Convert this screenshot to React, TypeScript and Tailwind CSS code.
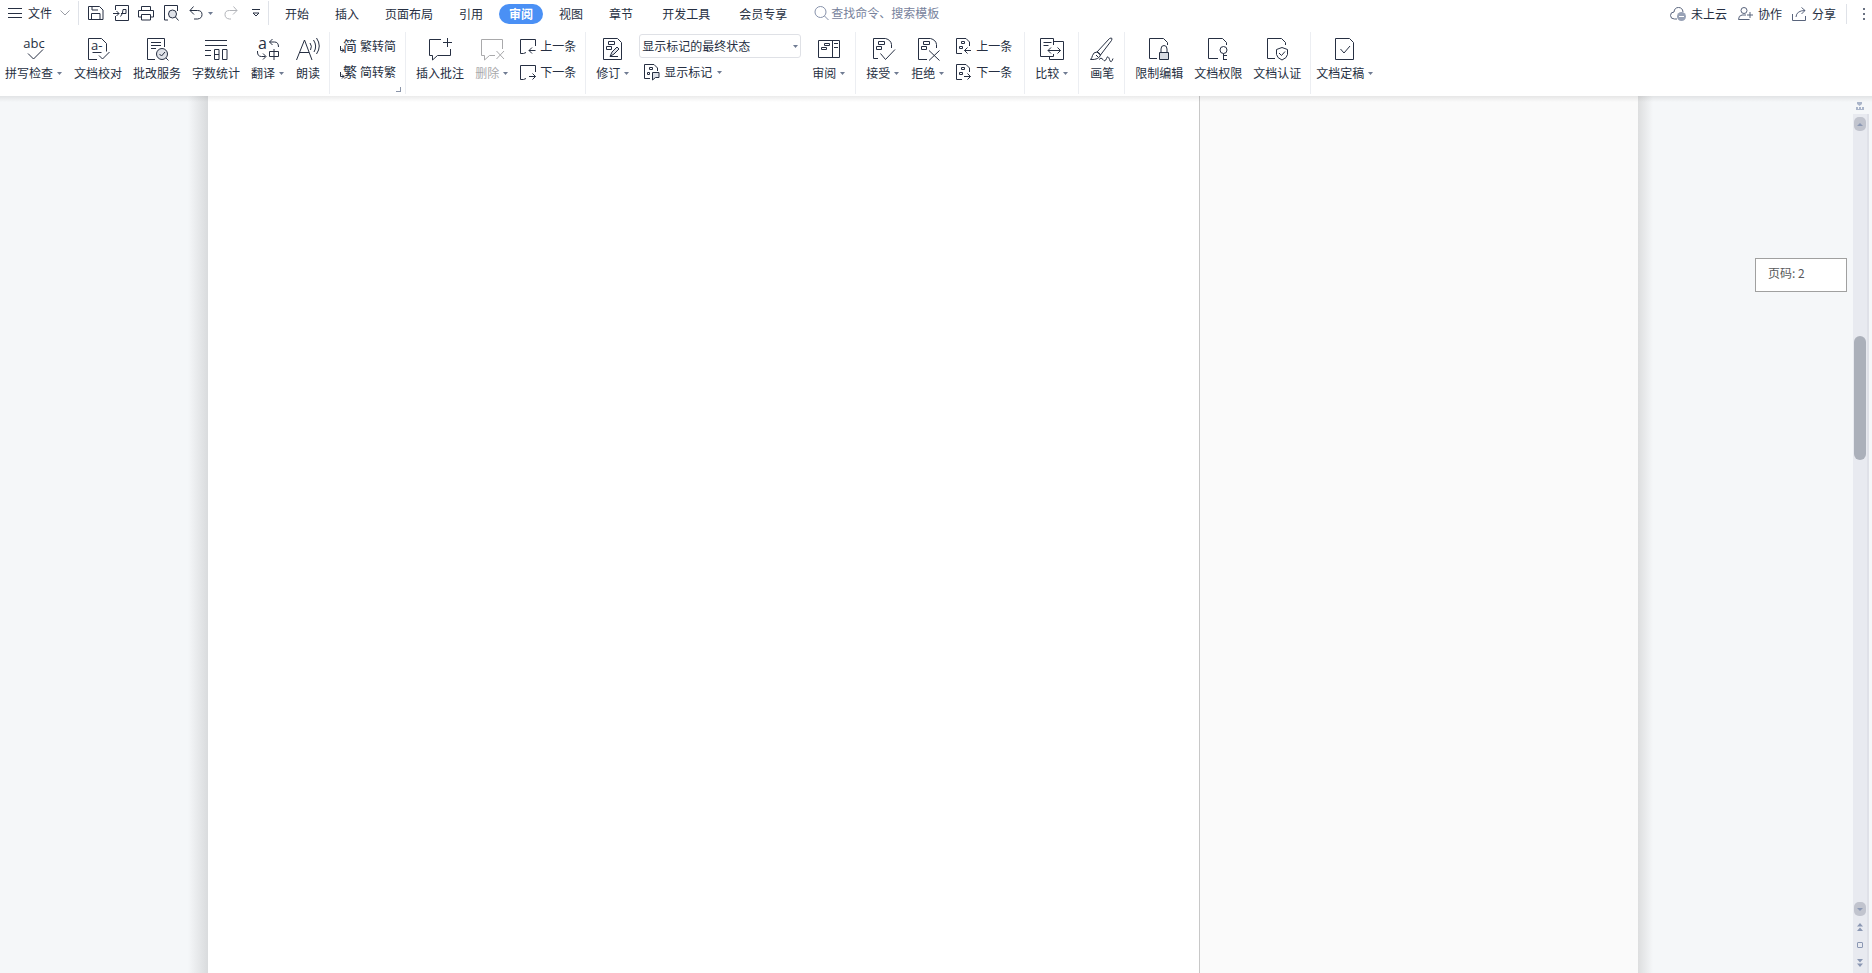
import React from "react";

type Children = { children: React.ReactNode };

function Glyph({ w, h, children }: Children & { w: number; h: number }) {
  return (
    <svg
      width={w}
      height={h}
      viewBox={`0 0 ${w} ${h}`}
      fill="none"
      stroke="currentColor"
      strokeWidth="1"
      aria-hidden="true"
      className="shrink-0 overflow-visible"
    >
      {children}
    </svg>
  );
}

function Caret() {
  return (
    <svg width="5" height="3" viewBox="0 0 5 3" fill="#6f7b92" aria-hidden="true" className="mx-px shrink-0">
      <path d="M0 0h5L2.500 3z" />
    </svg>
  );
}

function BigButton({
  label,
  icon,
  caret,
  disabled,
}: {
  label: string;
  icon: React.ReactNode;
  caret?: boolean;
  disabled?: boolean;
}) {
  return (
    <button
      type="button"
      disabled={disabled}
      className="flex shrink-0 flex-col items-center gap-1 self-start pt-[5px] text-[#262f42] disabled:text-[#a9a9ab]"
    >
      {icon}
      <span className="flex items-center gap-[3px] leading-4">
        {label}
        {caret && <Caret />}
      </span>
    </button>
  );
}

function SmallButton({ label, icon, caret }: { label: string; icon: React.ReactNode; caret?: boolean }) {
  return (
    <button type="button" className="flex h-5 shrink-0 items-center gap-1 text-[#262f42]">
      {icon}
      <span className="leading-4">{label}</span>
      {caret && <Caret />}
    </button>
  );
}

function Group({ children, last }: Children & { last?: boolean }) {
  return (
    <div
      className={
        last
          ? "relative flex shrink-0 gap-[11px] pl-[5px]"
          : "relative flex shrink-0 gap-[11px] border-r border-[#eceef2] pr-[9px] pl-[10px] first:pl-[5px]"
      }
    >
      {children}
    </div>
  );
}

/* Large ribbon icons */
const icons = {
  spell: (
    <Glyph w={24} h={24}>
      <text x="12" y="11" textAnchor="middle" fontSize="13" fill="currentColor" stroke="none" fontFamily="Open Sans, sans-serif">
        abc
      </text>
      <path d="M6 16.500l5.500 5.500 9.500-9.500" />
    </Glyph>
  ),
  proof: (
    <Glyph w={24} h={24}>
      <path d="M11 22.500H2.500V1.500H15.500L20.500 6.500V14.500M6.500 15.500h9M13 18.500l3.500 3.500 7-7" />
      <text x="5" y="12.500" fontSize="13" fill="currentColor" stroke="none" fontFamily="Open Sans, sans-serif">
        a-
      </text>
    </Glyph>
  ),
  grade: (
    <Glyph w={24} h={24}>
      <path d="M10 22.500H2.500V1.500H19.500V10M6 5.500h10M6 8.500h10M6 11.500h5" />
      <circle cx="17" cy="17" r="5.500" fill="#dfe2e8" />
      <path d="M14.500 17l2 2 3.500-4M21 21l2.500 2.500" />
    </Glyph>
  ),
  count: (
    <Glyph w={24} h={24}>
      <path d="M1 3.500h22M1 8.500h22M1 13.500h6M1 18.500h6M10.500 12.500h4.500v10h-4.500zM10.500 17.500h4.500M18.500 12.500h4.500v10h-4.500z" />
    </Glyph>
  ),
  translate: (
    <Glyph w={24} h={24}>
      <text x="2" y="12" fontSize="16" fill="currentColor" stroke="none" fontFamily="Open Sans, sans-serif">
        a
      </text>
      <path d="M16.500 2l-3 3 3 3M13.500 5h5q4 0 4 5M1.500 14v1q0 4.500 4 4.500h4M7 16.500l3 3-3 3M13.500 14.500h9v5h-9zM18 12v11" />
    </Glyph>
  ),
  read: (
    <Glyph w={24} h={24}>
      <path d="M.5 23L8.500 3l7.500 20M3.500 15.500h9.500M14 6q2.500 3 .5 7M17.500 3q4 6 .5 12M20.500 1q5.500 8 0 16" />
    </Glyph>
  ),
  addComment: (
    <Glyph w={26} h={24}>
      <path d="M14 2.500H2.500V18.500H5.500V23L10.500 18.500H23.500V12M20.500 1v9M16 5.500h9" />
    </Glyph>
  ),
  delComment: (
    <Glyph w={26} h={24}>
      <path d="M16 18.500H10.500L5.500 23V18.500H2.500V2.500H23.500V12M17.500 14l7.500 8M25 14l-7.500 8" />
    </Glyph>
  ),
  revise: (
    <Glyph w={24} h={24}>
      <path d="M2.500 1.500H16.500L20.500 5.500V22.500H2.500zM7.500 4.500h6v3h-6zM5.500 9.500h5v3h-5z" />
      <path d="M9 19.500l2-4.500 5-5 2 2-5 5zM9 19.500h8" fill="#e1e4ea" />
    </Glyph>
  ),
  review: (
    <Glyph w={24} h={24}>
      <path d="M1.500 3.500h21v17h-21zM15.500 3.500v17M17 6.500h4M17 10.500h4M7.500 6.500h5v2h-5zM4.500 10.500h5v2h-5z" />
    </Glyph>
  ),
  accept: (
    <Glyph w={24} h={24}>
      <path d="M7 21.500H2.500V1.500H14.500Q20 3 20.500 7.500V11M7.500 4.500h6v3h-6zM5.500 9.500h5v3h-5zM9.500 16.500l5 6 9.500-10" />
    </Glyph>
  ),
  reject: (
    <Glyph w={24} h={24}>
      <path d="M11 22.500H2.500V1.500H14.500Q20 3 20.500 7.500V11M7.500 4.500h6v3h-6zM5.500 9.500h5v3h-5zM13 13.500l10.500 10M23.500 13.500l-10.500 10" />
    </Glyph>
  ),
  compare: (
    <Glyph w={26} h={24}>
      <path d="M14.500 8V1.500H1.500V19.500H14.500V17M14.500 4.500H24.500V22.500H10.500V20M4.500 5.500h8M4.500 8.500h5M9 13.500h12.500M12 10.500l-3 3 3 3M18.500 10.500l3 3-3 3" />
    </Glyph>
  ),
  brush: (
    <Glyph w={26} h={24}>
      <path d="M8 15L20.500 1.500Q24 0 22.500 3.500L11.500 18zM8 15q2 0 3.500 3Q10 23 1.500 22.500Q3 21 3.500 18.500Q4.500 15 8 15zM7 18l2 2" />
      <path d="M10 22.500q2-3 4 0t3.500-1 3 1 3.500-1" />
    </Glyph>
  ),
  lock: (
    <Glyph w={24} h={24}>
      <path d="M10 21.500H2.500V1.500H16.500L20.500 5.500V8" />
      <path d="M14 15v-3q0-3.500 3-3.500t3 3.500v3" />
      <path d="M12.500 15.500h9v7h-9z" fill="#d8dbe2" />
    </Glyph>
  ),
  key: (
    <Glyph w={24} h={24}>
      <path d="M12 21.500H2.500V1.500H16.500L20.500 5.500V8M17.500 16.500v6.500M17.500 18.500h3.500M17.500 22.500h3.500" />
      <circle cx="17.500" cy="13" r="3.500" />
    </Glyph>
  ),
  shield: (
    <Glyph w={24} h={24}>
      <path d="M10 21.500H2.500V1.500H16.500L20.500 5.500V8M17 10.500l5.500 2v5q-.500 3.500-5.500 5.500-5-2-5.500-5.500v-5zM14 16l2.500 2.500 3.500-4" />
    </Glyph>
  ),
  final: (
    <Glyph w={24} h={24}>
      <path d="M2.500 1.500H16.500L20.500 5.500V22.500H2.500zM7.500 12l3.500 4 6-7" />
    </Glyph>
  ),
};

function Convert({ char }: { char: string }) {
  return (
    <Glyph w={16} h={18}>
      <text x="3" y="14" fontSize="14" fill="currentColor" stroke="none">
        {char}
      </text>
      <path d="M.5 9v4.500h3.500M2 11.500l2 2-2 2" />
    </Glyph>
  );
}

function CommentArrow({ next }: { next?: boolean }) {
  return (
    <Glyph w={16} h={18}>
      <path d="M6 15.500L3.500 16.500H.5V2.500H15.500V9" />
      <path d={next ? "M9 13.500h6.500M12.500 10.500l3 3-3 3" : "M15.500 13.500H9M12 10.500l-3 3 3 3"} />
    </Glyph>
  );
}

function ChangeArrow({ next }: { next?: boolean }) {
  return (
    <Glyph w={16} h={18}>
      <path d="M6 16.500H.5V1.500H10L13.500 5V9M5.500 4.500h3v2h-3zM3.500 9.500h3v2h-3z" />
      <path d={next ? "M8 13.500h6.500M11.500 10.500l3 3-3 3" : "M15 13.500H8.500M11.500 10.500l-3 3 3 3"} />
    </Glyph>
  );
}

const menus = ["开始", "插入", "页面布局", "引用", "审阅", "视图", "章节", "开发工具", "会员专享"];

function MenuTab({ name }: { name: string }) {
  const wide = name === "开发工具" || name === "会员专享";
  if (name === "审阅") {
    return (
      <button type="button" aria-current="page" className="mx-[3px] h-5 items-center rounded-full bg-[#4a90f5] px-[10px] font-bold text-white">
        {name}
      </button>
    );
  }
  return (
    <button type="button" className={wide ? "h-5 items-center pr-[13px] pl-4" : "h-5 items-center px-[13px]"}>
      {name}
    </button>
  );
}

function MenuBar() {
  return (
    <div className="flex h-[26px] items-center whitespace-nowrap">
      <button type="button" className="flex items-center pl-2">
        <Glyph w={14} h={12}>
          <path d="M0 1.500h14M0 6.500h14M0 10.500h14" />
        </Glyph>
        <span className="ml-[6px]">文件</span>
        <span className="ml-2 text-[#9a9da5]">
          <Glyph w={10} h={8}>
            <path d="M.5 1.500l4.500 4.500 4.500-4.500" />
          </Glyph>
        </span>
      </button>
      <div className="ml-2 flex h-6 items-center border-x border-[#dfe2e8] pr-2 pl-[9px]">
        <button type="button" aria-label="保存">
          <Glyph w={16} h={16}>
            <path d="M.5 1.500H11.500L15 5V14.500H.5zM3.500 14V8.500H12V14M4 1.500v3.500h6" />
          </Glyph>
        </button>
        <button type="button" aria-label="输出为PDF" className="ml-[9px]">
          <Glyph w={17} h={16}>
            <path d="M2.500 5V.5H15.500V15.500H2.500V11M0 8.500h6M3.500 6l2.500 2.500-2.500 2.500M7.500 11.500Q10 9 10 4.500h3v4H8" />
          </Glyph>
        </button>
        <button type="button" aria-label="打印" className="ml-2">
          <Glyph w={16} h={16}>
            <path d="M3.500 5V1.500h9V5M3.500 12H.5V5.500h15V12h-3M3.500 9.500h9v5.500h-9z" />
          </Glyph>
        </button>
        <button type="button" aria-label="打印预览" className="ml-[10px]">
          <Glyph w={16} h={16}>
            <path d="M4 15H.5V.5H13.500V6" />
            <circle cx="8.500" cy="9" r="4" fill="#dfe2e8" />
            <path d="M11.500 12l3 3.500" />
          </Glyph>
        </button>
        <button type="button" aria-label="撤销" className="ml-[9px]">
          <Glyph w={14} h={14}>
            <path d="M4.500.5L1 4.500l4 4M1 4.500h7.500q4.500 0 4.500 4t-4.500 4.500H5" />
          </Glyph>
        </button>
        <button type="button" aria-label="撤销列表" className="ml-1">
          <Caret />
        </button>
        <button type="button" aria-label="恢复" disabled className="ml-[10px] text-[#b2b4b9]">
          <Glyph w={14} h={14}>
            <path d="M9.500.5L13 4.500l-4 4M13 4.500H5.500Q1 4.500 1 8.500t4.500 4.500H7" />
          </Glyph>
        </button>
        <button type="button" aria-label="自定义快速访问工具栏" className="ml-[14px]">
          <Glyph w={8} h={8}>
            <path d="M0 .5h8M1 4l3 3 3-3z" />
          </Glyph>
        </button>
      </div>
      <nav aria-label="功能区" className="ml-[3px] flex items-center pt-px">
        {menus.map((name) => (
          <MenuTab key={name} name={name} />
        ))}
      </nav>
      <label className="ml-[14px] flex items-center gap-[2px] text-[#8792ab]">
        <Glyph w={15} h={16}>
          <circle cx="6.500" cy="7" r="5.500" />
          <path d="M10.500 11l4 4" />
        </Glyph>
        <input
          type="search"
          aria-label="搜索"
          placeholder="查找命令、搜索模板"
          className="w-32 bg-transparent outline-none placeholder:text-[#77829c]"
        />
      </label>
      <div className="ml-auto flex items-center pt-px pr-[6px]">
        <button type="button" className="flex items-center gap-1">
          <Glyph w={17} h={16}>
            <path d="M7 13H4.500Q.5 13 .5 9.500T4 6Q4.500 1.500 8.500 1.500T13 6" stroke="#59647c" />
            <circle cx="11.500" cy="10.500" r="4.500" fill="#98a2b6" stroke="none" />
            <path d="M9 10.500h5" stroke="#fff" />
          </Glyph>
          未上云
        </button>
        <button type="button" className="ml-[11px] flex items-center gap-[5px]">
          <Glyph w={15} h={16}>
            <circle cx="6" cy="4.500" r="3" stroke="#59647c" />
            <path d="M8 9H4Q.5 9.500.5 13.500H11.500M9 9h6M12 6v6" stroke="#59647c" />
          </Glyph>
          协作
        </button>
        <button type="button" className="ml-[10px] flex items-center gap-[5px]">
          <Glyph w={15} h={16}>
            <path d="M.5 8v6.500h13V10M4 11Q4.500 4.500 13 4.500M9.500 1.500l3.500 3-3.500 3.500" stroke="#59647c" />
          </Glyph>
          分享
        </button>
        <button type="button" aria-label="更多" className="ml-[10px] flex h-5 items-center border-l border-[#dfe2e8] pl-4">
          <svg width="3" height="12" viewBox="0 0 3 12" fill="#6a7282" aria-hidden="true">
            <path d="M0 0h2v2H0zM0 5h2v2H0zM0 10h2v2H0z" />
          </svg>
        </button>
      </div>
    </div>
  );
}

function Ribbon() {
  return (
    <div className="flex h-[70px] pt-[6px] pb-[2px] whitespace-nowrap">
      <Group>
        <BigButton label="拼写检查" icon={icons.spell} caret />
        <BigButton label="文档校对" icon={icons.proof} />
        <BigButton label="批改服务" icon={icons.grade} />
        <BigButton label="字数统计" icon={icons.count} />
        <BigButton label="翻译" icon={icons.translate} caret />
        <BigButton label="朗读" icon={icons.read} />
      </Group>
      <Group>
        <div className="flex flex-col gap-[6px] pt-1">
          <SmallButton label="繁转简" icon={<Convert char="简" />} />
          <SmallButton label="简转繁" icon={<Convert char="繁" />} />
        </div>
        <button type="button" aria-label="更多选项" className="absolute right-1 bottom-[2px] size-[5px] border-r border-b border-[#8a94a8]" />
      </Group>
      <Group>
        <BigButton label="插入批注" icon={icons.addComment} />
        <BigButton label="删除" icon={icons.delComment} caret disabled />
        <div className="flex flex-col gap-[6px] pt-1">
          <SmallButton label="上一条" icon={<CommentArrow />} />
          <SmallButton label="下一条" icon={<CommentArrow next />} />
        </div>
      </Group>
      <Group>
        <BigButton label="修订" icon={icons.revise} caret />
        <div className="-ml-[2px] flex flex-col items-start gap-1 pt-[2px]">
          <label className="relative flex items-center">
            <select
              aria-label="标记显示方式"
              className="h-6 w-[162px] appearance-none rounded-[3px] border border-[#dfe1e6] bg-white pl-[2px] text-[#262f42]"
            >
              <option>显示标记的最终状态</option>
            </select>
            <span className="pointer-events-none absolute right-[2px]">
              <Caret />
            </span>
          </label>
          <div className="pl-[5px]">
            <SmallButton
              label="显示标记"
              caret
              icon={
                <Glyph w={16} h={18}>
                  <path d="M6 15.500H.5V1.500H10L13.500 5V8M5.500 4.500h3v2h-3zM3.500 9.500h2v2h-2z" />
                  <path d="M8.500 9.500h6.500v5h-3.500l-3 2.500z" fill="#dfe2e8" />
                </Glyph>
              }
            />
          </div>
        </div>
        <BigButton label="审阅" icon={icons.review} caret />
      </Group>
      <Group>
        <BigButton label="接受" icon={icons.accept} caret />
        <BigButton label="拒绝" icon={icons.reject} caret />
        <div className="flex flex-col gap-[6px] pt-1 pr-[3px]">
          <SmallButton label="上一条" icon={<ChangeArrow />} />
          <SmallButton label="下一条" icon={<ChangeArrow next />} />
        </div>
      </Group>
      <Group>
        <BigButton label="比较" icon={icons.compare} caret />
      </Group>
      <Group>
        <BigButton label="画笔" icon={icons.brush} />
      </Group>
      <Group>
        <BigButton label="限制编辑" icon={icons.lock} />
        <BigButton label="文档权限" icon={icons.key} />
        <BigButton label="文档认证" icon={icons.shield} />
      </Group>
      <Group last>
        <BigButton label="文档定稿" icon={icons.final} caret />
      </Group>
    </div>
  );
}

function ScrollBar() {
  return (
    <aside className="flex w-[19px] shrink-0 flex-col">
      <div className="flex h-[18px] w-[14px] items-center justify-center pt-[2px]">
        <svg width="8" height="8" viewBox="0 0 8 8" fill="#aab5ca" aria-hidden="true">
          <path d="M1 0h5v2L3.500 4 1 2zM0 5h2v3H0zM3 5h2v3H3zM6 5h2v3H6zM0 7h8v1H0z" />
        </svg>
      </div>
      <div className="flex w-4 flex-1 flex-col items-start border-r-2 border-[#dfe1e8] bg-[#e8eaf0] pt-[3px] pl-px">
        <button type="button" aria-label="向上滚动" className="flex h-[14px] w-3 items-center justify-center rounded-[5px] bg-[#c1c4ce]">
          <svg width="6" height="3" viewBox="0 0 6 3" fill="#8b98b3" aria-hidden="true">
            <path d="M0 3h6L3 0z" />
          </svg>
        </button>
        <div className="flex-[205]" />
        <div className="w-3 flex-[124] rounded-full bg-[#abb0ba]" />
        <div className="flex-[442]" />
        <button type="button" aria-label="向下滚动" className="flex h-[14px] w-3 items-center justify-center rounded-[5px] bg-[#c1c4ce]">
          <svg width="6" height="3" viewBox="0 0 6 3" fill="#8b98b3" aria-hidden="true">
            <path d="M0 0h6L3 3z" />
          </svg>
        </button>
        <div className="flex w-3 flex-col items-center gap-[11px] pt-[7px] pb-[6px]">
          <button type="button" aria-label="上一页">
            <svg width="6" height="8" viewBox="0 0 6 8" fill="#8b98b3" aria-hidden="true">
              <path d="M0 3.500h6L3 0zM0 8h6L3 4.500z" />
            </svg>
          </button>
          <button type="button" aria-label="选择浏览对象" className="size-[6px] rounded-[1px] border border-[#8b98b3]" />
          <button type="button" aria-label="下一页">
            <svg width="6" height="8" viewBox="0 0 6 8" fill="#8b98b3" aria-hidden="true">
              <path d="M0 0h6L3 3.500zM0 4.500h6L3 8z" />
            </svg>
          </button>
        </div>
      </div>
    </aside>
  );
}

export default function App() {
  return (
    <div className="flex min-h-screen flex-col bg-[#f5f7f9] font-['Noto_Sans_CJK_SC',sans-serif] text-[12px] text-[#262f42] [&_button]:flex">
      <header className="bg-white">
        <MenuBar />
        <Ribbon />
      </header>
      <main className="relative flex flex-1">
        <div className="pointer-events-none absolute inset-x-0 top-0 h-[6px] bg-linear-to-b from-black/8 to-transparent" />
        <div className="grid flex-1 grid-cols-[208fr_992fr_438fr_215fr]">
          <div className="flex justify-end">
            <div className="w-5 bg-linear-to-r from-transparent to-[#d9dbdd]" />
          </div>
          <article aria-label="文档页面" className="border-r border-[#c8c8c8] bg-white" />
          <section aria-label="批注" className="bg-[#fafafa]" />
          <div className="flex">
            <div className="w-[15px] bg-linear-to-r from-[#dddedf] to-transparent" />
          </div>
        </div>
        <ScrollBar />
        <div role="tooltip" className="absolute top-[162px] right-[25px] h-[34px] w-[92px] border border-[#a0a0a0] bg-white pt-[6px] pl-3 leading-4 text-[#58595c]">
          页码: 2
        </div>
      </main>
    </div>
  );
}
